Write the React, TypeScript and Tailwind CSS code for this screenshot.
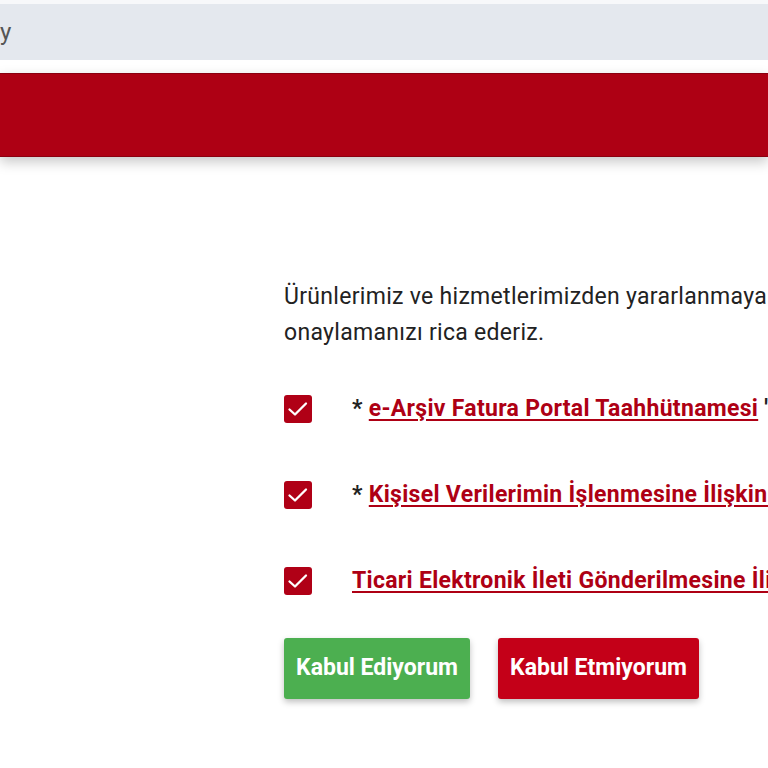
import React from "react";

function Check() {
  return (
    <div className="w-[28px] h-[28px] shrink-0 rounded-[3px] bg-[#b00016] flex items-center justify-center">
      <svg width="28" height="28" viewBox="0 0 28 28" fill="none">
        <path d="M5.5 14.5 L11 19.5 L22 8.5" stroke="white" strokeWidth="2.3" strokeLinecap="round" strokeLinejoin="round" />
      </svg>
    </div>
  );
}

export default function App() {
  return (
    <div className="w-[768px] h-[768px] overflow-hidden bg-white font-['Roboto',sans-serif]">
      <div className="h-[4px] bg-[#f7f8fa]" />
      <div className="h-[56px] bg-[#e4e8ee] flex items-center">
        <span className="text-[24px] text-[#555] whitespace-nowrap">y</span>
      </div>
      <div className="h-[13px]" />
      <div className="h-[84px] bg-[#ae0014] border-y border-[#8a0010] shadow-[0_5px_12px_rgba(0,0,0,0.22)]" />
      <div className="pl-[284px] pt-[122px] w-[1600px]">
        <p className="text-[23px] leading-[36px] tracking-[0.3px] text-[#222] whitespace-nowrap">
          Ürünlerimiz ve hizmetlerimizden yararlanmaya devam edebilmeniz için aşağıdaki metinleri okuyup
          <br />
          onaylamanızı rica ederiz.
        </p>
        <div className="mt-[44px] flex flex-col gap-[58px]">
          <div className="flex items-center h-[28px] gap-[40px]">
            <Check />
            <span className="text-[23px] font-bold tracking-[0.3px] text-[#222] whitespace-nowrap">
              *{" "}
              <a className="text-[#ae0014] underline underline-offset-[3px] decoration-[1.5px]">
                e-Arşiv Fatura Portal Taahhütnamesi
              </a>{" "}
              'ni okudum, onaylıyorum.
            </span>
          </div>
          <div className="flex items-center h-[28px] gap-[40px]">
            <Check />
            <span className="text-[23px] font-bold tracking-[0.3px] text-[#222] whitespace-nowrap">
              *{" "}
              <a className="text-[#ae0014] underline underline-offset-[3px] decoration-[1.5px]">
                Kişisel Verilerimin İşlenmesine İlişkin Aydınlatma Metni
              </a>{" "}
              'ni okudum.
            </span>
          </div>
          <div className="flex items-center h-[28px] gap-[40px]">
            <Check />
            <span className="text-[23px] font-bold tracking-[0.3px] text-[#222] whitespace-nowrap">
              <a className="text-[#ae0014] underline underline-offset-[3px] decoration-[1.5px]">
                Ticari Elektronik İleti Gönderilmesine İlişkin Onay Metni
              </a>{" "}
              'ni okudum, onaylıyorum.
            </span>
          </div>
        </div>
        <div className="mt-[43px] flex gap-[28px]">
          <button className="w-[186px] h-[61px] rounded-[3px] bg-[#4caf50] text-white text-[23px] font-bold shadow-[0_3px_6px_rgba(0,0,0,0.25)]">
            Kabul Ediyorum
          </button>
          <button className="w-[201px] h-[61px] rounded-[3px] bg-[#c40018] text-white text-[23px] font-bold shadow-[0_3px_6px_rgba(0,0,0,0.25)]">
            Kabul Etmiyorum
          </button>
        </div>
      </div>
    </div>
  );
}
